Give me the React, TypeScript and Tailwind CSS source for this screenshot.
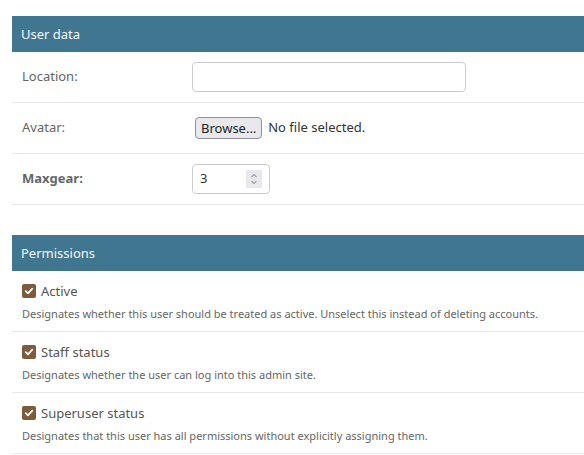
import React from 'react';

const font = { fontFamily: '"Noto Sans", "Open Sans", sans-serif' };

const Caption = ({ title }: { title: string }) => (
  <h2 className="flex h-[36px] items-center bg-[#417690] px-[9px] pt-[1px] text-[13px] text-[#f4f8fa]">
    {title}
  </h2>
);

const Row = ({ label, bold, children }: { label: string; bold?: boolean; children: React.ReactNode }) => (
  <div className="flex h-[51px] items-center border-b border-[#e8e8e8] px-[10px]">
    <label className={`w-[170px] shrink-0 text-[13px] text-[#666] ${bold ? 'font-bold' : ''}`}>{label}</label>
    {children}
  </div>
);

const Check = ({ label, help }: { label: string; help: string }) => (
  <div className="h-[61px] border-b border-[#e8e8e8] px-[10px] pt-[11px]">
    <div className="flex items-center gap-[5px]">
      <span className="flex h-[14px] w-[14px] items-center justify-center rounded-[2px] bg-[#7c5c3d]">
        <svg width="10" height="10" viewBox="0 0 10 10" fill="none">
          <path d="M1.8 5.2 4 7.3 8.3 2.6" stroke="#fff" strokeWidth="1.8" strokeLinecap="round" strokeLinejoin="round" />
        </svg>
      </span>
      <span className="text-[13px] leading-[18px] text-[#555]">{label}</span>
    </div>
    <p className="mt-[5px] text-[11px] leading-[17px] text-[#666]">{help}</p>
  </div>
);

export default function App() {
  return (
    <div className="min-h-[455px] bg-white pl-[12px] pt-[16px]" style={font}>
      <fieldset>
        <Caption title="User data" />
        <Row label="Location:">
          <input className="h-[30px] w-[274px] rounded-[4px] border border-[#ccc] px-2 text-[13px]" />
        </Row>
        <Row label="Avatar:">
          <div className="flex items-center gap-[6px] pl-[3px] text-[13px] text-[#333]">
            <button className="h-[22px] rounded-[4px] border border-[#8f8f9d] bg-[#e9e9ed] px-[5px] text-[13px] leading-[18px] text-[#222]">
              Browse…
            </button>
            <span>No file selected.</span>
          </div>
        </Row>
        <Row label="Maxgear:" bold>
          <div className="flex h-[30px] w-[78px] items-center justify-between rounded-[4px] border border-[#ccc] pl-[7px] pr-[7px] text-[13px] text-[#333]">
            <span>3</span>
            <span className="flex h-[18px] w-[16px] flex-col items-center justify-center bg-[#e9e9ed]">
              <svg width="8" height="14" viewBox="0 0 8 14" fill="none" stroke="#9a9aa3" strokeWidth="1.1">
                <path d="M1.5 5 4 2.5 6.5 5" />
                <path d="M1.5 9 4 11.5 6.5 9" />
              </svg>
            </span>
          </div>
        </Row>
      </fieldset>
      <fieldset className="mt-[30px]">
        <Caption title="Permissions" />
        <Check
          label="Active"
          help="Designates whether this user should be treated as active. Unselect this instead of deleting accounts."
        />
        <Check label="Staff status" help="Designates whether the user can log into this admin site." />
        <Check
          label="Superuser status"
          help="Designates that this user has all permissions without explicitly assigning them."
        />
      </fieldset>
    </div>
  );
}
